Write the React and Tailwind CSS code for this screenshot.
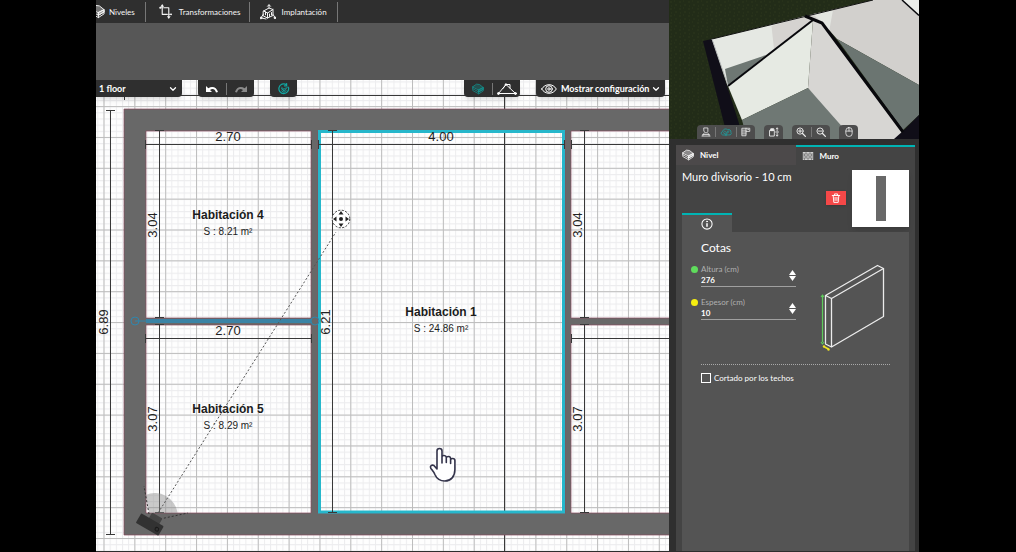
import { useState } from "react";
import { FiChevronDown } from "react-icons/fi";

const rooms = [
    { name: "Habitación 4", area: "S : 8.21 m²", x: 228, y: 219 },
    { name: "Habitación 5", area: "S : 8.29 m²", x: 228, y: 413 },
    { name: "Habitación 1", area: "S : 24.86 m²", x: 441, y: 316 },
];

// horizontal dimension lines
const widths = [
    { x1: 145, x2: 312, y: 144, label: "2.70", tx: 228, ty: 141 },
    { x1: 145, x2: 312, y: 338, label: "2.70", tx: 228, ty: 335 },
    { x1: 318, x2: 565, y: 144, label: "4.00", tx: 441, ty: 141 },
    { x1: 571, x2: 1400, y: 144 },
    { x1: 571, x2: 1400, y: 338 },
    { x1: 124, x2: 1400, y: 95 },
];

// vertical dimension lines
const heights = [
    { y1: 110, y2: 535, x: 110, label: "6.89", tx: 108, ty: 322 },
    { y1: 130, y2: 318, x: 159, label: "3.04", tx: 157, ty: 225 },
    { y1: 324, y2: 513, x: 159, label: "3.07", tx: 157, ty: 419 },
    { y1: 130, y2: 513, x: 332, label: "6.21", tx: 330, ty: 322 },
    { y1: 130, y2: 318, x: 584, label: "3.04", tx: 582, ty: 225 },
    { y1: 324, y2: 513, x: 584, label: "3.07", tx: 582, ty: 419 },
];

const Svg = ({ className, box = "0 0 16 16", children }) => (
    <svg className={className} viewBox={box} fill="none" stroke="currentColor" strokeWidth="1" strokeLinecap="round" strokeLinejoin="round" aria-hidden="true">
        {children}
    </svg>
)

const LayersIcon = ({ className }) => (
    <Svg className={className}>
        <path d="M1 5 6 1.500l4 .5 5 4-6 3Z" fill="currentColor" fillOpacity=".35" />
        <path d="M1 5v2.500L9 12V9M1 7.500V10l8 4.500V12M9 14.500l6-4V6M9 12l6-3.500" />
        <path d="m9 9 6-3v2.500L9 12Z" fill="currentColor" fillOpacity=".6" />
    </Svg>
)

const CropIcon = ({ className }) => (
    <Svg className={className}>
        <path d="M4.500 2.500V11H10M6 4h5.500v9" strokeWidth="1.200" />
        <path d="M4.500 0 2.500 3h4ZM11.500 16l-2-3h4Z" fill="currentColor" stroke="none" />
        <circle cx="2.300" cy="4" r="1" fill="currentColor" stroke="none" />
        <circle cx="14" cy="11" r="1" fill="currentColor" stroke="none" />
        <path d="M2.500 4h2M11.500 11h2" />
    </Svg>
)

const PlotIcon = ({ className }) => (
    <Svg className={className}>
        <path d="M3.500 7 9 4l4 1.500v6l-5.500 2.500-4-2ZM3.500 7l4 2L13 5.500M7.500 9v5M5.500 7.800v3M9.500 10v2.500M11.500 8.500V11" />
        <path d="M3.500 10 1 13.800 6 15M13 10.500l2 3M9 4V1" />
        <circle cx="1" cy="14" r=".9" fill="currentColor" />
        <circle cx="15" cy="13.800" r=".9" fill="currentColor" />
        <path d="M7.500 2.300 9 .7l1.500 1.600" />
    </Svg>
)

const UndoIcon = ({ className }) => (
    <svg className={className} viewBox="0 0 12 8" aria-hidden="true">
        <path d="M0 1v6h6L4 5c2.500-1.800 5-1 6 2.500L12 7C10.700 2.500 6.500.500 2.300 3.300Z" fill="currentColor" />
    </svg>
)

const RefreshIcon = ({ className }) => (
    <Svg className={className}>
        <path d="M14 6a6.500 6.500 0 1 1-3-4M11.500.800v3h-3" strokeWidth="1.600" />
        <path d="m4.500 7.500 3.500 3 5-5.500M5 6l3 2.500 2-2M5 10.500l3 2 3-2.500" strokeWidth="1.300" />
    </Svg>
)

const RoofIcon = ({ className }) => (
    <Svg className={className} box="0 0 20 12">
        <path d="M1.500 10.500h17M1.500 10.500 9 1.500l9.500 9M6 5.500 9 1.500h4v3.500" />
        <circle cx="1.500" cy="10.500" r="1" fill="currentColor" />
        <circle cx="18.500" cy="10.500" r="1" fill="currentColor" />
        <circle cx="9" cy="1.500" r=".8" fill="currentColor" />
    </Svg>
)

const EyeIcon = ({ className }) => (
    <Svg className={className} box="0 0 16 12">
        <path d="M.7 6C4 .200 12 .200 15.300 6 12 11.800 4 11.800.7 6Z" />
        <circle cx="8" cy="6" r="3.300" />
        <circle cx="8" cy="6" r="1.200" />
    </Svg>
)

const OrbitIcon = ({ className }) => (
    <Svg className={className}>
        <path d="M4 12C1 12 .7 8 3.500 7.500 4 4 8 3 10 5c3-1 5 1 4.500 3.500C16 10 14.500 12.500 12 12Z" />
        <path d="m4.500 9 3.500 2 4-3.500M6 7l2.500 1.500L11 7M8 11v2" />
    </Svg>
)

const PersonIcon = ({ className }) => (
    <Svg className={className}>
        <path d="M5 1.500h6V7l-2 2.500H7L5 7ZM5.500 9.500 3 12h10l-2.500-2.500M1.500 14.500h13M3 12v2M13 12v2" strokeWidth="1.300" />
    </Svg>
)

const LayoutIcon = ({ className }) => (
    <Svg className={className}>
        <path d="M2 2h12v5H8v7H2ZM2 5h6M2 8h6M2 11h6M8 2v5M11 4h1" strokeWidth="1.300" />
    </Svg>
)

const MoveViewIcon = ({ className }) => (
    <Svg className={className}>
        <path d="M1.500 5.500h7v9h-7ZM3 5V3h5v2" strokeWidth="1.400" />
        <path d="M13 1.500v5M13 9.500v5M11.500 3 13 1.500 14.500 3M11.500 13l1.500 1.500 1.500-1.500M10.500 8h5" strokeWidth="1.300" />
        <path d="M3 3h4v3H3Z" fill="currentColor" />
    </Svg>
)

const ZoomIcon = ({ className, plus }) => (
    <Svg className={className}>
        <circle cx="6.500" cy="6.500" r="5" strokeWidth="1.500" />
        <path d="m10.500 10.500 4.500 4.500" strokeWidth="2" />
        <path d={plus ? "M6.500 4v5M4 6.500h5" : "M4 6.500h5"} strokeWidth="1.500" />
    </Svg>
)

const MouseIcon = ({ className }) => (
    <Svg className={className}>
        <rect x="3" y="1" width="10" height="14" rx="4.500" strokeWidth="1.300" />
        <path d="M3 6.500h10M8 1v5.500" strokeWidth="1.300" />
    </Svg>
)

const BricksIcon = ({ className }) => (
    <svg className={className} viewBox="0 0 13 10" aria-hidden="true">
        <path d="M0 0h13v10H0Z" fill="#d0d0d0" />
        <path d="M0 2.500h13M0 5h13M0 7.500h13M4 0v2.500M9 0v2.500M2 2.500V5M6.500 2.500V5M11 2.500V5M4 5v2.500M9 5v2.500M2 7.500V10M6.500 7.500V10M11 7.500V10" stroke="#555" strokeWidth=".7" />
    </svg>
)

const TrashIcon = ({ className }) => (
    <Svg className={className}>
        <path d="M2 4h12M5.500 4V1.500h5V4M3.500 4l1 11h7l1-11M6.500 7v5M9.500 7v5" strokeWidth="1.500" />
    </Svg>
)

const InfoIcon = ({ className }) => (
    <Svg className={className}>
        <circle cx="8" cy="8" r="6.800" strokeWidth="1.400" />
        <path d="M8 7.500v3.500" strokeWidth="2" />
        <circle cx="8" cy="4.600" r=".7" fill="currentColor" />
    </Svg>
)

const Separator = ({ className }) => <span className={`w-px bg-[#777777] ${className}`} />

const FloorPlan = () => (
    <svg className="absolute inset-0 h-full w-full" role="img" aria-label="1 floor">
        <defs>
            <pattern id="minor" width="6.170" height="6.170" patternUnits="userSpaceOnUse" patternTransform="translate(103.500 106.100)">
                <path d="M0 .5h6.170M.5 0v6.170" stroke="#ececee" strokeWidth="1" />
            </pattern>
            <pattern id="major" width="30.850" height="30.850" patternUnits="userSpaceOnUse" patternTransform="translate(103.500 106.100)">
                <path d="M0 .5h30.850M.5 0v30.850" stroke="#bdbdbd" strokeWidth="1" />
            </pattern>
        </defs>
        <g transform="translate(-96 -80)">
            <rect x="96" y="80" width="2000" height="1500" fill="#fefefe" />
            <rect x="96" y="80" width="2000" height="1500" fill="url(#minor)" />
            <rect x="96" y="80" width="2000" height="1500" fill="url(#major)" />
            <path d="M504.500 80V1500" stroke="#3a3a3a" />

            <path
                d="M124 109H1400V535H124ZM146 131V318H311V131ZM146 325V513H311V325ZM318 131V513H565V131ZM571 131V318H1400V131ZM571 325V513H1400V325Z"
                fill="#686868"
                fillRule="evenodd"
                stroke="#8b4a60"
                strokeWidth=".7"
            />
            <rect x="319.500" y="131.500" width="244" height="380.500" fill="none" stroke="#26b7cb" strokeWidth="3" />
            <path d="M146 321H311" stroke="#3a83a5" strokeWidth="4" />
            <g fill="none" stroke="#2f86ad">
                <path d="M135 321h11" />
                <circle cx="135" cy="321" r="4" />
                <circle cx="315" cy="321" r="4" />
            </g>

            <g stroke="#383838" fill="none">
                {widths.map((w, index) => (
                    <path key={index} d={`M${w.x1} ${w.y + 0.5}H${w.x2}M${w.x1 + 0.5} ${w.y - 4}v9M${w.x2 - 0.5} ${w.y - 4}v9`} />
                ))}
                {heights.map((h, index) => (
                    <path key={index} d={`M${h.x + 0.5} ${h.y1}V${h.y2}M${h.x - 4} ${h.y1 + 0.5}h9M${h.x - 4} ${h.y2 - 0.5}h9`} />
                ))}
            </g>

            <g className="font-['Liberation_Sans',sans-serif] text-[13px]" fill="#222" textAnchor="middle">
                {widths.filter(w => w.label).map((w, index) => (
                    <text key={index} x={w.tx} y={w.ty}>{w.label}</text>
                ))}
                {heights.map((h, index) => (
                    <text key={index} transform={`translate(${h.tx} ${h.ty}) rotate(-90)`}>{h.label}</text>
                ))}
            </g>

            <g className="font-['Liberation_Sans',sans-serif]" fill="#1c1c1c" textAnchor="middle">
                {rooms.map((room) => (
                    <g key={room.name}>
                        <text className="text-[12px] font-bold" x={room.x} y={room.y}>{room.name}</text>
                        <text className="text-[10px]" x={room.x} y={room.y + 16}>{room.area}</text>
                    </g>
                ))}
            </g>

            {/* camera and its target */}
            <path d="M149 513 145.500 495A23 23 0 0 1 177.500 513Z" fill="#8a8a8a" fillOpacity=".45" />
            <path d="M158 513 336 232" stroke="#555" strokeDasharray="2 2" />
            <path d="M149 514 144 486M160 519l28-6" stroke="#333" strokeDasharray="2 2" />
            <g transform="translate(149.500 525) rotate(30)">
                <rect x="-4" y="-12" width="12" height="8" rx="1" fill="#444" />
                <rect x="-13" y="-6" width="26" height="11" rx="1" fill="#323232" />
                <circle cx="8.500" cy="0" r="1.800" fill="none" stroke="#1a1a1a" />
            </g>
            <g transform="translate(341 219)">
                <circle r="8.800" fill="#fff" stroke="#333" strokeDasharray="2 1.500" />
                <circle r="2" fill="#222" />
                <path d="M0-8 2.500-4.500h-5ZM0 8l2.500-3.500h-5ZM-8 0l3.500-2.500v5ZM8 0 4.500-2.500v5Z" fill="#222" />
            </g>

            {/* hand */}
            <path
                d="M437 469V451c0-3.300 5-3.300 5 0v12-6c0-2 4-2 4.300.5v5-4.500c0-2 4.200-2 4.300.5v5-3.500c0-2 4.200-2 4.300.5v9c0 7-4 11.500-10 11.500-5.500 0-8.500-3-10-6.500-1-2.500-2.500-4-4-6-1.500-2.500 1-4 3-3Z"
                fill="#fff"
                stroke="#33334a"
                strokeWidth="1.600"
                strokeLinejoin="round"
            />
        </g>
    </svg>
)

const View3D = () => (
    <svg className="absolute inset-0 h-full w-full" viewBox="0 0 250 139" preserveAspectRatio="xMidYMid slice" role="img" aria-label="3D">
        <defs>
            <pattern id="grass" width="9" height="7" patternUnits="userSpaceOnUse">
                <path d="M0 0h9v7H0Z" fill="#222c18" />
                <path d="M1 2h2M6 5h2M5 1h1M2 6h1" stroke="#2c351c" />
            </pattern>
        </defs>
        <rect width="250" height="139" fill="url(#grass)" />
        <path d="M34 41 43 39 75 139H59Z" fill="#100e18" />
        <path d="M43 39 136 16 144 20 59 86Z" fill="#e5e8e3" />
        <path d="m102.500 26 33.500-10 8 4-39 29Z" fill="#d5d3d0" />
        <path d="m56 69 41-14-38 31Z" fill="#6e7773" />
        <path d="M144 20 59 86 73 120 139 88Z" fill="#e6eae3" />
        <path d="M139 88 73 120 78 139H190Z" fill="#6f7874" />
        <path d="m144 20 9 3 81 109-8 7h-42L139 88Z" fill="#d7d6d3" />
        <path d="M136 16 204 0h46v85L168 39 153 22Z" fill="#d2d0cd" />
        <path d="m144 14 20-4-4 22-8-10Z" fill="#e4e6e1" />
        <path d="m168 39 82 46v30l-16 15Z" fill="#6b7571" />
        <path d="m234 131 16-16v24h-25Z" fill="#100e18" />
        <path d="M233 0h17v15Z" fill="#eceeea" />
        <path d="m233 0 17 15.500" stroke="#08080c" strokeWidth="1.500" />
        <path d="M43 39 204 0" stroke="#111" />
        <path d="m43 39 16 47" stroke="#b9bbbd" />
        <path d="m144 20-85 66" stroke="#08080c" strokeWidth="2" />
        <path d="m136 16 17 7 81 109" stroke="#08080c" strokeWidth="3" fill="none" />
    </svg>
)

const WallDrawing = () => (
    <svg className="h-[88px] w-[68px] shrink-0" viewBox="0 0 68 88" fill="none" strokeLinejoin="round" aria-hidden="true">
        <g stroke="#ececec" strokeWidth="1.300">
            <path d="M7.500 31.500 59.500 1.500l6 3-52 30Z" />
            <path d="M65.500 4.500v48L13.500 83M7.500 31.500V80l6 3V34.500" />
        </g>
        <path d="M4.500 32v46M3 33l1.500-2L6 33M3 78l1.500 2L6 78" stroke="#5fca5c" strokeWidth="1.200" />
        <path d="m6.500 83 4 2" stroke="#f2e520" strokeWidth="1.500" />
        <circle cx="6" cy="82.500" r="1.200" fill="#f2e520" />
        <circle cx="10.500" cy="85.500" r="1.200" fill="#f2e520" />
    </svg>
)

const NumberField = ({ id, label, dot, value, onChange }) => (
    <div className="relative flex items-end border-b border-[#a0a0a0] pb-px">
        <span className={`absolute top-0.5 -left-2.5 size-[7px] rounded-full ${dot}`} />
        <div className="flex min-w-0 flex-1 flex-col">
            <label htmlFor={id} className="text-[8px] leading-[11px] text-[#b0b0b0]">{label}</label>
            <input
                id={id}
                value={value}
                onChange={(e) => onChange(Number(e.target.value) || 0)}
                className="w-full bg-transparent text-[8px] leading-[10px] font-bold text-white outline-none"
            />
        </div>
        <div className="mb-1 flex flex-col gap-px">
            <button type="button" aria-label="+" onClick={() => onChange(value + 1)}>
                <svg className="h-[5px] w-[7px]" viewBox="0 0 7 5"><path d="M0 5 3.500 0 7 5Z" fill="#fff" /></svg>
            </button>
            <button type="button" aria-label="-" onClick={() => onChange(value - 1)}>
                <svg className="h-[5px] w-[7px]" viewBox="0 0 7 5"><path d="M0 0h7L3.500 5Z" fill="#fff" /></svg>
            </button>
        </div>
    </div>
)

export default function App() {
    const [height, setHeight] = useState(276);
    const [thickness, setThickness] = useState(10);
    const [cut, setCut] = useState(false);

    return (
        <div className="flex min-h-screen bg-black pr-[97px] pl-24 font-[Lato,sans-serif] text-white [&_button]:cursor-pointer [&_svg]:block">
            <main className="flex min-w-0 flex-1 flex-col overflow-hidden border-b border-[#2d2d2d]">
                <nav className="flex h-[23px] items-center bg-[#2f2f2f] text-[8px] text-[#f5f5f5]">
                    <button type="button" className="-ml-1.5 flex items-center gap-1">
                        <LayersIcon className="size-[15px]" />
                        Niveles
                    </button>
                    <Separator className="ml-2.5 h-5" />
                    <button type="button" className="ml-3 flex items-center gap-1.5">
                        <CropIcon className="size-[15px]" />
                        Transformaciones
                    </button>
                    <Separator className="ml-2 h-5" />
                    <button type="button" className="ml-2.5 flex items-center gap-1.5">
                        <PlotIcon className="size-4" />
                        Implantación
                    </button>
                    <Separator className="ml-2.5 h-5" />
                </nav>
                <div className="h-[57px] bg-[#575757]" />

                <div className="relative flex-1 overflow-hidden">
                    <FloorPlan />
                    <div className="relative flex items-start">
                        <div className="relative h-[17px] w-[86px] rounded-br bg-[#2f2f2f] shadow-md">
                            <select aria-label="Nivel" className="block h-full w-full appearance-none bg-transparent pl-[3px] text-[9px] leading-4 font-bold outline-none">
                                <option>1 floor</option>
                            </select>
                            <FiChevronDown className="pointer-events-none absolute top-1 right-1 size-2.5 stroke-[3px]" />
                        </div>
                        <div className="ml-4 flex h-[17px] items-center rounded-b bg-[#2f2f2f] shadow-md">
                            <button type="button" aria-label="Deshacer" className="flex w-7 justify-center"><UndoIcon className="h-2 w-3" /></button>
                            <Separator className="h-3" />
                            <button type="button" aria-label="Rehacer" className="flex w-[27px] justify-center text-[#8a8a8a]"><UndoIcon className="h-2 w-3 -scale-x-100" /></button>
                        </div>
                        <button type="button" aria-label="Actualizar" className="ml-4 flex h-[17px] w-[27px] items-center justify-center rounded-b bg-[#2f2f2f] text-[#12a8a3] shadow-md">
                            <RefreshIcon className="size-3" />
                        </button>
                        <div className="mr-4 ml-auto flex h-[17px] items-center rounded-b bg-[#2f2f2f] shadow-md">
                            <button type="button" aria-label="3D" className="flex w-7 justify-center text-[#14918f]"><LayersIcon className="size-3" /></button>
                            <Separator className="h-3" />
                            <button type="button" aria-label="Techo" className="flex w-[27px] justify-center"><RoofIcon className="h-3 w-5" /></button>
                        </div>
                        <button type="button" className="mr-1 flex h-[17px] w-[129px] items-center rounded-b bg-[#2f2f2f] pl-[5px] text-[9px] font-bold shadow-md">
                            <EyeIcon className="mr-1 h-3 w-4" />
                            Mostrar configuración
                            <FiChevronDown className="mr-1 ml-auto size-2.5 stroke-[3px]" />
                        </button>
                    </div>
                </div>
            </main>

            <aside className="flex w-[250px] shrink-0 flex-col border-b border-[#2d2d2d] bg-[#2f2f2f]">
                <div className="relative flex h-[139px] flex-col justify-end overflow-hidden">
                    <View3D />
                    <div className="relative flex gap-[9px] pl-7 text-[#ededed] [&>*]:h-3.5 [&>*]:rounded-t-sm [&>*]:bg-[#4d4d4d]">
                        <div className="flex w-[58px] items-center justify-between px-1">
                            <button type="button" aria-label="Persona"><PersonIcon className="size-2.5" /></button>
                            <Separator className="h-2.5" />
                            <button type="button" aria-label="Órbita" className="text-[#1aa5a5]"><OrbitIcon className="size-3" /></button>
                            <Separator className="h-2.5" />
                            <button type="button" aria-label="Plano"><LayoutIcon className="size-2.5" /></button>
                        </div>
                        <button type="button" aria-label="Mover" className="flex w-[19px] items-center justify-center"><MoveViewIcon className="size-2.5" /></button>
                        <div className="flex w-[38px] items-center justify-between px-1">
                            <button type="button" aria-label="Acercar"><ZoomIcon plus className="size-2.5" /></button>
                            <Separator className="h-2.5" />
                            <button type="button" aria-label="Alejar"><ZoomIcon className="size-2.5" /></button>
                        </div>
                        <button type="button" aria-label="Ratón" className="flex w-[19px] items-center justify-center"><MouseIcon className="size-2.5" /></button>
                    </div>
                </div>

                <section className="mx-1 mt-1.5 ml-[7px] flex flex-1 flex-col bg-[#444444]">
                    <div className="flex h-5 text-[8px] font-bold">
                        <button type="button" className="flex flex-1 items-center gap-1.5 bg-[#4c494a] pl-1.5">
                            <LayersIcon className="size-3" />
                            Nivel
                        </button>
                        <button type="button" className="flex flex-1 items-center gap-1.5 border-t-2 border-[#00b4b4] pl-1.5">
                            <BricksIcon className="h-2 w-3" />
                            Muro
                        </button>
                    </div>

                    <div className="flex pr-1.5 pl-1.5">
                        <div className="flex min-w-0 flex-1 flex-col">
                            <h2 className="mt-1 text-[11px] leading-4">Muro divisorio - 10 cm</h2>
                            <button type="button" aria-label="Eliminar" className="mt-1.5 mr-1.5 flex h-3.5 w-5 items-center justify-center self-end bg-[#f54848] shadow">
                                <TrashIcon className="size-2.5" />
                            </button>
                            <button type="button" aria-label="Información" className="mt-2 flex h-[19px] w-[50px] items-center justify-center border-t-2 border-[#00b4b4] bg-[#545454]">
                                <InfoIcon className="size-3" />
                            </button>
                        </div>
                        <div className="mt-[5px] flex size-[57px] items-center justify-center bg-white shadow-md">
                            <div className="h-[45px] w-2.5 bg-[#686868]" />
                        </div>
                    </div>

                    <div className="mx-1.5 flex-1 bg-[#545454] px-[19px] pt-2">
                        <h3 className="text-[12px] leading-4">Cotas</h3>
                        <div className="flex justify-between">
                            <div className="mt-2 flex w-[95px] flex-col gap-2.5">
                                <NumberField id="altura" label="Altura (cm)" dot="bg-[#5fdc5c]" value={height} onChange={setHeight} />
                                <NumberField id="espesor" label="Espesor (cm)" dot="bg-[#f5ee10]" value={thickness} onChange={setThickness} />
                            </div>
                            <div className="mt-2 mr-1"><WallDrawing /></div>
                        </div>
                        <label className="mt-3 flex items-center gap-[3px] border-t border-dotted border-[#a8a8a8] pt-2 text-[8px] leading-[10px]">
                            <input
                                type="checkbox"
                                checked={cut}
                                onChange={(e) => setCut(e.target.checked)}
                                className="size-2.5 appearance-none border border-white checked:bg-[#00b4b4]"
                            />
                            Cortado por los techos
                        </label>
                    </div>
                </section>
            </aside>
        </div>
    )
}
